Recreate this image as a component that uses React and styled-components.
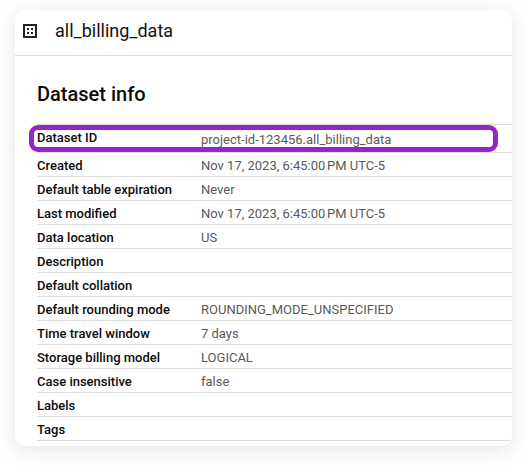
import React from "react";
import styled, { createGlobalStyle } from "styled-components";

const GlobalStyle = createGlobalStyle`
  * { box-sizing: border-box; }
  body { margin: 0; background: #fff; font-family: Roboto, Arial, sans-serif; }
`;

const Page = styled.main`
  height: 466px;
  padding: 10px 15px 20px;
  overflow: hidden;
`;

const Card = styled.section`
  width: 497px;
  height: 436px;
  overflow: hidden;
  background: #fff;
  border-radius: 10px;
  box-shadow: 0 4px 20px rgba(0, 0, 0, 0.11);
`;

const Header = styled.header`
  display: flex;
  align-items: center;
  gap: 18px;
  height: 46px;
  padding: 0 8px 3px;
  border-bottom: 1px solid #dcdcdc;
`;

const Title = styled.h1`
  margin: 0;
  font-size: 18px;
  font-weight: 400;
  line-height: 24px;
  color: #111;
`;

const Heading = styled.h2`
  margin: 0;
  padding: 26px 0 0 22px;
  height: 68px;
  font-size: 20px;
  font-weight: 500;
  line-height: 24px;
  color: #0c0c0c;
`;

const Details = styled.dl`
  margin: 0 0 0 22px;
  border-top: 1px solid #dcdcdc;
`;

const Row = styled.div`
  display: grid;
  grid-template-columns: 164px 1fr;
  position: relative;
  height: ${(p) => (p.$highlighted ? 28 : 24)}px;
  border-bottom: 1px solid #dcdcdc;
  font-size: 13px;
  line-height: 25px;
`;

const Outline = styled.span`
  position: absolute;
  inset: 0 14px 0 -8px;
  border: 5px solid #9823c6;
  border-radius: 9px;
`;

const Label = styled.dt`
  font-weight: 500;
  color: #0c0c0c;
`;

const Value = styled.dd`
  margin: 0;
  padding-top: ${(p) => (p.$highlighted ? 2 : 0)}px;
  color: #5a5a5a;
`;

const rows = [
  ["Dataset ID", "project-id-123456.all_billing_data", true],
  ["Created", "Nov 17, 2023, 6:45:00\u202fPM UTC-5"],
  ["Default table expiration", "Never"],
  ["Last modified", "Nov 17, 2023, 6:45:00\u202fPM UTC-5"],
  ["Data location", "US"],
  ["Description", ""],
  ["Default collation", ""],
  ["Default rounding mode", "ROUNDING_MODE_UNSPECIFIED"],
  ["Time travel window", "7 days"],
  ["Storage billing model", "LOGICAL"],
  ["Case insensitive", "false"],
  ["Labels", ""],
  ["Tags", ""],
];

function DatasetIcon() {
  return (
    <svg width="14" height="14" viewBox="0 0 14 14" fill="#222" aria-hidden="true">
      <path fillRule="evenodd" d="M0 0h14v14H0zM2 2v10h10V2z" />
      <path d="M4 4h2v2H4zM8 4h2v2H8zM4 8h2v2H4zM8 8h2v2H8z" />
    </svg>
  );
}

export default function App() {
  return (
    <Page>
      <GlobalStyle />
      <Card>
        <Header>
          <DatasetIcon />
          <Title>all_billing_data</Title>
        </Header>
        <Heading>Dataset info</Heading>
        <Details>
          {rows.map(([label, value, highlighted]) => (
            <Row key={label} $highlighted={highlighted}>
              <Label>{label}</Label>
              <Value $highlighted={highlighted}>{value}</Value>
              {highlighted && <Outline />}
            </Row>
          ))}
        </Details>
      </Card>
    </Page>
  );
}
